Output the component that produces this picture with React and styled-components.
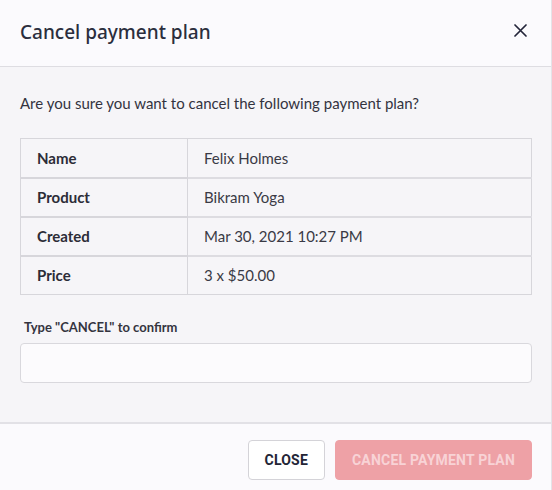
import React from 'react';
import styled, { createGlobalStyle } from 'styled-components';

const GlobalStyle = createGlobalStyle`
    html, body {
        margin: 0;
        padding: 0;
        background: #f6f5f8;
    }
    * {
        box-sizing: border-box;
    }
`;

const rows = [
    { label: 'Name', value: 'Felix Holmes' },
    { label: 'Product', value: 'Bikram Yoga' },
    { label: 'Created', value: 'Mar 30, 2021 10:27 PM' },
    { label: 'Price', value: '3 x $50.00' },
];

export default function App() {
    return (
        <>
            <GlobalStyle />
            <Dialog>
                <Header>
                    <Title>Cancel payment plan</Title>
                    <CloseIcon aria-label="Close">
                        <svg width="13" height="13" viewBox="0 0 13 13">
                            <path d="M1 1 L12 12 M12 1 L1 12" stroke="#23253a" strokeWidth="1.7" strokeLinecap="round" />
                        </svg>
                    </CloseIcon>
                </Header>
                <Body>
                    <Question>Are you sure you want to cancel the following payment plan?</Question>
                    <Table>
                        <tbody>
                            {rows.map((row) => (
                                <tr key={row.label}>
                                    <LabelCell>{row.label}</LabelCell>
                                    <ValueCell>{row.value}</ValueCell>
                                </tr>
                            ))}
                        </tbody>
                    </Table>
                    <Field>
                        <FieldLabel>Type "CANCEL" to confirm</FieldLabel>
                        <Input type="text" />
                    </Field>
                </Body>
                <Footer>
                    <Button>CLOSE</Button>
                    <Button danger disabled>CANCEL PAYMENT PLAN</Button>
                </Footer>
            </Dialog>
        </>
    );
}

const Dialog = styled.div`
    width: 552px;
    height: 490px;
    display: flex;
    flex-direction: column;
    background: #f6f5f8;
    border-right: 1px solid #e4e3e8;
    font-family: "Lato", "Liberation Sans", sans-serif;
    color: #2f2f3b;
`;

const Header = styled.div`
    height: 67px;
    display: flex;
    align-items: center;
    justify-content: space-between;
    padding: 0 24px 2px 20px;
    background: #fbfafd;
    border-bottom: 1px solid #dedde2;
`;

const Title = styled.h1`
    margin: 0;
    font-family: "Noto Sans", "Liberation Sans", sans-serif;
    font-size: 19px;
    font-weight: 500;
    color: #2b2e3d;
`;

const CloseIcon = styled.button`
    display: flex;
    align-items: center;
    justify-content: center;
    padding: 0;
    border: none;
    background: transparent;
    cursor: pointer;
    margin-top: -4px;
`;

const Body = styled.div`
    flex: 1;
    padding: 27px 19px 0 20px;
`;

const Question = styled.p`
    margin: 0 0 26px 0;
    font-size: 15px;
    color: #33333f;
`;

const Table = styled.table`
    width: 100%;
    border-collapse: collapse;
    border: 1px solid #d7d6db;
    font-size: 15px;
`;

const LabelCell = styled.td`
    width: 167px;
    height: 39px;
    padding: 0 16px;
    border: 1px solid #d7d6db;
    border-width: 2px 1px 0 0;
    font-weight: 700;
    color: #2c2c37;
    tr:first-child & {
        border-top: 0;
    }
`;

const ValueCell = styled.td`
    height: 39px;
    padding: 0 16px;
    border-top: 2px solid #dddce1;
    color: #3a3a45;
    tr:first-child & {
        border-top: 0;
    }
`;

const Field = styled.div`
    display: flex;
    flex-direction: column;
    margin-top: 24px;
`;

const FieldLabel = styled.label`
    font-size: 13px;
    font-weight: 700;
    color: #34343f;
    margin: 0 0 8px 4px;
`;

const Input = styled.input`
    height: 40px;
    border: 1px solid #d9d8dd;
    border-radius: 4px;
    background: #fcfbfd;
    font-size: 15px;
    padding: 0 12px;
    outline: none;
`;

const Footer = styled.div`
    height: 68px;
    display: flex;
    align-items: flex-start;
    justify-content: flex-end;
    gap: 10px;
    padding: 16px 19px 0 20px;
    background: #fbfafd;
    border-top: 2px solid #e2e1e6;
`;

const Button = styled.button`
    height: 40px;
    padding: 0 16px;
    border-radius: 4px;
    font-family: "Roboto", "Liberation Sans", sans-serif;
    font-size: 14px;
    font-weight: 700;
    letter-spacing: 0.2px;
    cursor: pointer;
    border: 1px solid ${(props) => (props.danger ? '#eea1a6' : '#d4d3d8')};
    background: ${(props) => (props.danger ? '#eea1a6' : '#ffffff')};
    color: ${(props) => (props.danger ? '#f8d3d6' : '#232536')};
    &:disabled {
        cursor: default;
    }
`;
